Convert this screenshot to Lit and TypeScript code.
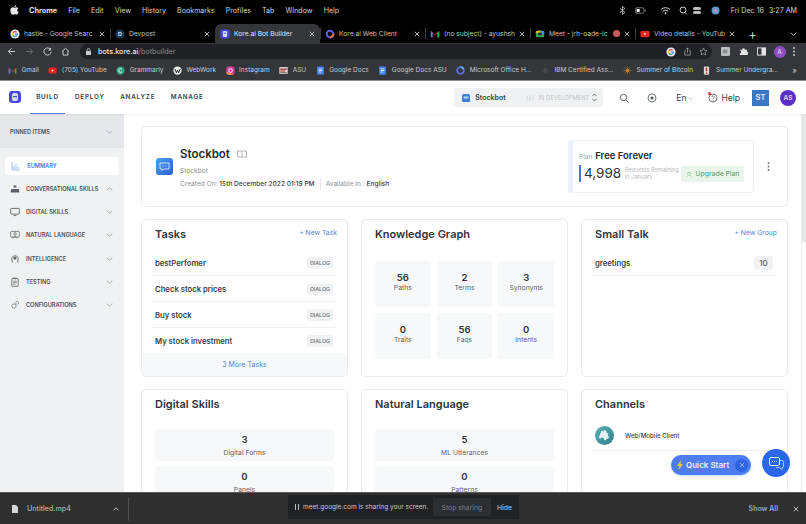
import { LitElement, html, css } from 'lit'
import { customElement } from 'lit/decorators.js'

const chevronDown = html`<svg class="chev" viewBox="0 0 10 6"><path d="M1 1l4 4 4-4" fill="none" stroke="#8a8f98" stroke-width="1"/></svg>`
const chevronUp = html`<svg class="chev" viewBox="0 0 10 6"><path d="M1 5l4-4 4 4" fill="none" stroke="#8a8f98" stroke-width="1"/></svg>`
const closeX = html`<svg class="x" viewBox="0 0 8 8"><path d="M1 1l6 6M7 1L1 7" stroke="#c8cacc" stroke-width="1.2"/></svg>`

const fav = {
  google: html`<svg class="ic" viewBox="0 0 24 24"><circle cx="12" cy="12" r="11" fill="#e8eaed"/><path d="M12 5a7 7 0 0 1 5 2l-2 2a4 4 0 0 0-6.500 1L6 8a7 7 0 0 1 6-3z" fill="#ea4335"/><path d="M6 8l2.500 2a4 4 0 0 0 0 4L6 16a7 7 0 0 1 0-8z" fill="#fbbc05"/><path d="M6 16l2.500-2a4 4 0 0 0 6 1.500l2 2A7 7 0 0 1 6 16z" fill="#34a853"/><path d="M19 11h-7v3h4a3 3 0 0 1-1.500 1.500l2 2A7 7 0 0 0 19 11z" fill="#4285f4"/></svg>`,
  devpost: html`<svg class="ic" viewBox="0 0 24 24"><circle cx="12" cy="12" r="11" fill="#1c3a57"/><text x="12" y="17" text-anchor="middle" font-size="13" font-weight="700" fill="#d9e4ee" font-family="Liberation Sans">D</text></svg>`,
  kore: html`<svg class="ic" viewBox="0 0 24 24"><rect x="1" y="1" width="22" height="22" rx="5" fill="#4a48d8"/><rect x="7" y="5" width="10" height="14" rx="3" fill="#d6d8fa"/><rect x="9" y="9" width="6" height="2" fill="#4a48d8"/></svg>`,
  ring: html`<svg class="ic" viewBox="0 0 24 24"><circle cx="12" cy="12" r="8" fill="none" stroke="#5a5ae0" stroke-width="5"/><path d="M12 20a8 8 0 0 0 8-8" fill="none" stroke="#e8703a" stroke-width="5"/></svg>`,
  gmail: html`<svg class="ic" viewBox="0 0 24 24"><path d="M2 5l10 8 10-8v15h-4V10l-6 5-6-5v10H2z" fill="#d9483b"/><path d="M18 10l4-5v15h-4z" fill="#34a853"/><path d="M2 5l4 5v10H2z" fill="#4285f4"/></svg>`,
  meet: html`<svg class="ic" viewBox="0 0 24 24"><rect x="2" y="4" width="20" height="16" rx="4" fill="#34a853"/><path d="M2 8a4 4 0 0 1 4-4h8v5H2z" fill="#fbbc05"/><path d="M14 4h4a4 4 0 0 1 4 4v4h-8z" fill="#4285f4"/><rect x="8" y="9" width="8" height="6" fill="#202124"/></svg>`,
  youtube: html`<svg class="ic" viewBox="0 0 24 24"><rect x="1" y="4" width="22" height="16" rx="4" fill="#e0281f"/><path d="M10 9l5 3-5 3z" fill="#fff"/></svg>`,
  grammarly: html`<svg class="ic" viewBox="0 0 24 24"><circle cx="12" cy="12" r="11" fill="#2fa37c"/><path d="M16 9a5 5 0 1 0 0 6" fill="none" stroke="#fff" stroke-width="2.500"/></svg>`,
  webwork: html`<svg class="ic" viewBox="0 0 24 24"><circle cx="12" cy="12" r="11" fill="#e8eaed"/><path d="M5 8l4 10 3-7 3 7 4-10" fill="none" stroke="#222" stroke-width="2.500"/></svg>`,
  instagram: html`<svg class="ic" viewBox="0 0 24 24"><rect x="1" y="1" width="22" height="22" rx="7" fill="#d6409f"/><path d="M1 16a7 7 0 0 0 7 7h8a7 7 0 0 0 4-1.500z" fill="#f79a3e"/><circle cx="12" cy="12" r="5" fill="none" stroke="#fff" stroke-width="2"/></svg>`,
  asu: html`<svg class="ic" viewBox="0 0 24 24"><rect x="1" y="3" width="22" height="18" fill="#e8e2d8"/><rect x="3" y="7" width="18" height="3" fill="#8c1d40"/><rect x="3" y="12" width="14" height="3" fill="#b33"/><rect x="3" y="17" width="18" height="2" fill="#444"/></svg>`,
  docs: html`<svg class="ic" viewBox="0 0 24 24"><rect x="3" y="1" width="18" height="22" rx="2" fill="#4285f4"/><path d="M7 8h10M7 12h10M7 16h7" stroke="#fff" stroke-width="2"/></svg>`,
  office: html`<svg class="ic" viewBox="0 0 24 24"><circle cx="12" cy="12" r="9" fill="none" stroke="#5b6fe0" stroke-width="5"/><path d="M12 3a9 9 0 0 1 8 5" fill="none" stroke="#58b8e8" stroke-width="5"/></svg>`,
  ibm: html`<svg class="ic" viewBox="0 0 24 24"><path d="M2 12l5-4v8zM9 6h6v12H9zM17 9l5 3-5 3z" fill="#4a4d50"/></svg>`,
  sun: html`<svg class="ic" viewBox="0 0 24 24"><circle cx="12" cy="12" r="5" fill="#d18a2c"/><path d="M12 1v22M1 12h22M4 4l16 16M20 4L4 20" stroke="#b5762a" stroke-width="1.500"/></svg>`,
  summer: html`<svg class="ic" viewBox="0 0 24 24"><rect x="5" y="1" width="14" height="22" rx="3" fill="#e4dcd8"/><rect x="10" y="4" width="4" height="10" fill="#c22e2e"/><rect x="10" y="17" width="4" height="4" fill="#c22e2e"/></svg>`,
}

const tabs = [
  { icon: fav.google, title: 'hastle - Google Searc' },
  { icon: fav.devpost, title: 'Devpost' },
  { icon: fav.kore, title: 'Kore.ai Bot Builder', active: true },
  { icon: fav.ring, title: 'Kore.ai Web Client' },
  { icon: fav.gmail, title: '(no subject) - ayushsh' },
  { icon: fav.meet, title: 'Meet - jrh-oade-ic', rec: true },
  { icon: fav.youtube, title: 'Video details - YouTub' },
]

const bookmarks = [
  { icon: fav.gmail, title: 'Gmail' },
  { icon: fav.youtube, title: '(705) YouTube' },
  { icon: fav.grammarly, title: 'Grammarly' },
  { icon: fav.webwork, title: 'WebWork' },
  { icon: fav.instagram, title: 'Instagram' },
  { icon: fav.asu, title: 'ASU' },
  { icon: fav.docs, title: 'Google Docs' },
  { icon: fav.docs, title: 'Google Docs ASU' },
  { icon: fav.office, title: 'Microsoft Office H...' },
  { icon: fav.ibm, title: 'IBM Certified Ass...' },
  { icon: fav.sun, title: 'Summer of Bitcoin' },
  { icon: fav.summer, title: 'Summer Undergra...' },
]

const navIcons = {
  chat: html`<svg class="nav-ic" viewBox="0 0 14 14"><path d="M5 2h4v3H5zM2 7h10l1 3H1zM1 10h12v2H1z" fill="#5b6068"/></svg>`,
  screen: html`<svg class="nav-ic" viewBox="0 0 14 14"><rect x="1" y="2" width="12" height="8" rx="1" fill="none" stroke="#5b6068" stroke-width="1.200"/><path d="M5 12h4" stroke="#5b6068" stroke-width="1.200"/></svg>`,
  language: html`<svg class="nav-ic" viewBox="0 0 14 14"><rect x="1" y="2" width="12" height="8" rx="1" fill="none" stroke="#5b6068"/><circle cx="7" cy="5.500" r="1.800" fill="none" stroke="#5b6068"/><path d="M4 12c0-2 1-3 3-3s3 1 3 3" fill="none" stroke="#5b6068"/></svg>`,
  brain: html`<svg class="nav-ic" viewBox="0 0 14 14"><path d="M3 12V9a4.500 4.500 0 1 1 8 0v3" fill="none" stroke="#5b6068" stroke-width="1.300"/><circle cx="7" cy="6" r="2" fill="#5b6068"/></svg>`,
  clipboard: html`<svg class="nav-ic" viewBox="0 0 14 14"><rect x="2.500" y="2" width="9" height="11" rx="1" fill="none" stroke="#5b6068" stroke-width="1.200"/><rect x="5" y="1" width="4" height="2" fill="#5b6068"/><path d="M4.500 6h5M4.500 8h5M4.500 10h3" stroke="#5b6068"/></svg>`,
  gears: html`<svg class="nav-ic" viewBox="0 0 14 14"><circle cx="5.500" cy="8.500" r="3" fill="none" stroke="#5b6068" stroke-width="1.300" stroke-dasharray="2 .7"/><circle cx="10" cy="4" r="2" fill="none" stroke="#5b6068" stroke-width="1.200" stroke-dasharray="1.500 .6"/></svg>`,
}

const navItems = [
  { icon: navIcons.chat, label: 'CONVERSATIONAL SKILLS', open: true },
  { icon: navIcons.screen, label: 'DIGITAL SKILLS' },
  { icon: navIcons.language, label: 'NATURAL LANGUAGE' },
  { icon: navIcons.brain, label: 'INTELLIGENCE' },
  { icon: navIcons.clipboard, label: 'TESTING' },
  { icon: navIcons.gears, label: 'CONFIGURATIONS' },
]

const taskRows = ['bestPerfomer', 'Check stock prices', 'Buy stock', 'My stock investment']
const graphStats = [
  ['56', 'Paths'], ['2', 'Terms'], ['3', 'Synonyms'],
  ['0', 'Traits'], ['56', 'Faqs'], ['0', 'Intents'],
]

@customElement('app-root')
export class AppRoot extends LitElement {
  static styles = css`
    :host {
      display: flex;
      flex-direction: column;
      position: relative;
      width: 806px;
      height: 524px;
      overflow: hidden;
      background: #fff;
      font-family: Inter, 'Liberation Sans', sans-serif;
      color: #2b2f36;
    }
    svg { display: block; flex: none; }
    .ic { width: 10px; height: 10px; }
    .chev { width: 7px; height: 4px; }
    .x { width: 6px; height: 6px; }

    /* mac menu bar */
    .menubar {
      height: 20px;
      flex: none;
      background: #000;
      color: #d4d4d4;
      font-size: 7.100px;
      display: flex;
      align-items: center;
      gap: 11px;
      padding: 0 9px 0 10px;
    }
    .menubar b { color: #e4e4e4; font-size: 7.300px; font-weight: 700; }
    .apple { width: 9px; height: 10px; margin-right: -1px; }
    .status { margin-left: auto; display: flex; align-items: center; gap: 7px; }
    .status span + span { margin-left: -2px; }
    .status-ic { width: 11px; height: 9px; }
    .status .wide { margin-right: 7px; }
    .status .tight { margin-right: -4px; }
    .status .siri { margin-right: 3px; }

    /* tab strip */
    .tabstrip {
      height: 23px;
      flex: none;
      background: #000;
      padding: 4px 0 0 5px;
      box-sizing: border-box;
      display: flex;
      align-items: stretch;
    }
    .tab {
      position: relative;
      width: 105px;
      box-sizing: border-box;
      padding: 0 5px;
      display: flex;
      align-items: center;
      gap: 4px;
      font-size: 6.700px;
      color: #bfc1c4;
      border-radius: 6px 6px 0 0;
    }
    .tab.active { background: #35363a; color: #e3e4e6; }
    .tab .t { flex: 1; overflow: hidden; white-space: nowrap; }
    .tab + .tab:not(.active)::before {
      content: '';
      position: absolute;
      left: 0;
      top: 4px;
      height: 11px;
      width: 1px;
      background: #3c3d40;
    }
    .rec { width: 7px; height: 7px; border-radius: 50%; background: #c95b5b; flex: none; }
    .plus { color: #e8e8e8; font-size: 14px; font-weight: 300; margin-left: 8px; align-self: center; }
    .tab-menu { margin-left: auto; align-self: center; margin-right: 9px; }

    /* chrome toolbar */
    .toolbar {
      height: 17px;
      flex: none;
      background: #35363a;
      display: flex;
      align-items: center;
      padding: 0 11px 0 7px;
      gap: 9px;
    }
    .tool { width: 9px; height: 9px; }
    .omnibox {
      flex: 1;
      height: 15px;
      margin-left: 1px;
      background: #202124;
      border-radius: 8px;
      display: flex;
      align-items: center;
      gap: 7px;
      padding: 0 4px 0 6px;
      font-size: 7.200px;
      color: #e6e6e6;
    }
    .omnibox span { flex: 1; font-weight: 500; }
    .omnibox i { font-style: normal; color: #8a8c90; font-weight: 400; }
    .lock { width: 5px; height: 7px; }
    .dots { width: 2px; height: 9px; }
    .avatar-a {
      width: 12px; height: 12px; border-radius: 50%;
      margin: 0 -1.500px;
      background: #8e4ec6; color: #eee; font-size: 6px;
      display: flex; align-items: center; justify-content: center;
    }

    /* bookmarks */
    .bookmarks {
      height: 21px;
      flex: none;
      box-sizing: border-box;
      background: #35363a;
      border-bottom: 1px solid #8f9092;
      display: flex;
      align-items: center;
      padding: 0 9px 0 8px;
      gap: 9.500px;
      font-size: 6.500px;
      color: #c9cbce;
    }
    .bm { display: flex; align-items: center; gap: 4.500px; white-space: nowrap; }
    .bm .ic { width: 9px; height: 9px; }
    .more { margin-left: auto; font-size: 8px; }

    /* app header */
    .app-header {
      height: 33px;
      flex: none;
      display: flex;
      align-items: stretch;
      padding: 0 10px 0 9px;
      box-shadow: 0 1px 2px #0000000d;
      position: relative;
      z-index: 1;
    }
    .logo { width: 12px; height: 12px; align-self: center; margin: 0 9px 2px 0; }
    .top-nav {
      display: flex;
      align-items: center;
      padding: 0 7px 1px;
      margin-right: 1.500px;
      font-size: 6.300px;
      font-weight: 600;
      letter-spacing: 0.800px;
      color: #3c4048;
    }
    .top-nav.active { box-shadow: inset 0 -1px 0 #4a76d9; width: 35px; box-sizing: border-box; justify-content: center; padding: 0 0 1px; margin-right: 3px; }
    .selector {
      margin: 7px 0 7px auto;
      width: 149px;
      box-sizing: border-box;
      background: #f0f1f3;
      border-radius: 2px;
      display: flex;
      align-items: center;
      padding: 0 6px 0 8px;
      font-size: 7px;
      font-weight: 600;
      color: #3c4048;
    }
    .selector .name { margin-left: 5px; flex: 1; }
    .selector .env { color: #c0c3c8; font-size: 5.800px; font-weight: 400; margin-left: 5px; margin-right: 3px; }
    .sel-ic { width: 8px; height: 8px; }
    .code-ic { width: 8px; height: 6px; }
    .updown { width: 5px; height: 9px; }
    .head-ic { width: 10px; height: 10px; }
    .head-ic.target { margin-left: 18px; }
    .head-tools { display: flex; align-items: center; margin-left: 16px; font-size: 8.500px; color: #3c4048; }
    .en { margin-left: 19px; display: flex; align-items: center; gap: 2px; font-size: 8.500px; }
    .en .chev { width: 5px; height: 3px; margin-top: 2px; }
    .help { margin-left: 15px; display: flex; align-items: center; gap: 3px; position: relative; }
    .help::before {
      content: '';
      position: absolute;
      left: 0; top: -1px;
      width: 3px; height: 3px;
      border-radius: 50%;
      background: #d9302f;
    }
    .st {
      margin-left: 12px;
      width: 17px; height: 16px;
      background: #3b78c4;
      color: #e8eef6;
      font-size: 7.500px;
      font-weight: 600;
      display: flex; align-items: center; justify-content: center;
    }
    .as {
      margin-left: 11px;
      width: 16px; height: 16px;
      border-radius: 50%;
      background: #5b2fc9;
      color: #e4dcf6;
      font-size: 6.500px;
      font-weight: 600;
      display: flex; align-items: center; justify-content: center;
    }

    /* body */
    .body { flex: 1; min-height: 0; display: flex; }
    .sidebar { width: 124px; flex: none; background: #f0f1f3; }
    .pinned {
      height: 34px;
      box-sizing: border-box;
      padding: 1px 11px 0 10px;
      background: #e6e7ea;
      display: flex;
      align-items: center;
      justify-content: space-between;
      font-size: 5.600px;
      font-weight: 600;
      color: #4b4f57;
    }
    .summary {
      margin: 9px 5px 2px;
      height: 18px;
      background: #fff;
      border-radius: 3px;
      display: flex;
      align-items: center;
      gap: 6px;
      padding: 0 6px 1px;
      box-sizing: border-box;
      font-size: 5.600px;
      font-weight: 600;
      color: #4a76d9;
    }
    .nav-ic { width: 10px; height: 10px; }
    .nav-item {
      height: 23.300px;
      display: flex;
      align-items: center;
      gap: 6px;
      padding: 0 11px 0 10px;
      font-size: 5.600px;
      font-weight: 600;
      color: #4b4f57;
    }
    .nav-item span { flex: 1; white-space: nowrap; }
    .content {
      flex: 1;
      min-width: 0;
      overflow: hidden;
      padding: 12px 13px 0 17px;
      display: grid;
      grid-template-columns: repeat(3, 1fr);
      grid-auto-rows: min-content;
      gap: 12px 13px;
    }
    .scrollbar { width: 4px; flex: none; border-left: 1px solid #e9eaec; }
    .scrollbar div { height: 128px; background: #e6e7e9; }

    .card {
      background: #fff;
      border: 1px solid #e8eaed;
      border-radius: 5px;
      box-sizing: border-box;
      position: relative;
      overflow: hidden;
    }
    .bot-card {
      grid-column: 1 / -1;
      height: 81px;
      display: flex;
      align-items: center;
      padding: 0 17px 0 14px;
    }
    .bot-icon { width: 17px; height: 17px; margin-right: 7px; }
    .bot-info { padding-top: 3px; }
    .bot-title { display: flex; align-items: center; gap: 7px; font-size: 11.500px; font-weight: 600; color: #26292e; line-height: 15px; }
    .bot-title svg { width: 10px; height: 8px; }
    .bot-sub { font-size: 6.600px; color: #8b8f96; margin-top: 3px; line-height: 12px; }
    .bot-meta { font-size: 6.600px; color: #8b8f96; margin-top: 1px; line-height: 12px; display: flex; }
    .bot-meta b { color: #3c4048; font-weight: 500; }
    .bot-meta .sep { border-left: 1px solid #e4e6e9; margin: 0 5px; }
    .plan {
      margin-left: auto;
      width: 186px;
      height: 53px;
      box-sizing: border-box;
      border: 1px solid #f0f1f3;
      border-left: 5px solid #eaf0fc;
      border-radius: 4px;
      padding: 9px 8px 0 6px;
    }
    .plan-top { display: flex; align-items: baseline; gap: 3px; font-size: 6.500px; color: #a0a4aa; }
    .plan-top b { font-size: 9.500px; font-weight: 600; color: #26292e; }
    .plan-row { display: flex; align-items: center; margin-top: 4px; }
    .plan-num {
      border-left: 2.500px solid #4a76d9;
      padding-left: 3px;
      font-size: 13.500px;
      line-height: 17px;
      width: 41px;
      box-sizing: border-box;
      color: #30343a;
      flex: none;
    }
    .plan-note { font-size: 5.600px; line-height: 7px; color: #b8bbc0; margin-left: 5px; width: 56px; flex: none; white-space: nowrap; }
    .upgrade {
      width: 63px; height: 16px;
      background: #e9f5ea;
      color: #69a971;
      border-radius: 2px;
      font-size: 6.800px;
      font-weight: 500;
      display: flex; align-items: center; justify-content: center; gap: 4px;
    }
    .upgrade svg { width: 6px; height: 6px; }
    .kebab { width: 3px; height: 9px; margin-left: 13px; }

    .tile-card { height: 158px; padding: 0 13px; }
    .tile-card.open { height: 200px; }
    .card-head {
      display: flex;
      justify-content: space-between;
      align-items: flex-start;
      padding-top: 7px;
      height: 30px;
      box-sizing: border-box;
      font-size: 11px;
      font-weight: 600;
      color: #30343a;
      line-height: 14px;
    }
    .card-head a { font-size: 6.800px; font-weight: 400; color: #5a7fd8; line-height: 10px; margin: 1px -3px 0 0; }
    .list-row {
      height: 26px;
      margin: 0 -3px;
      padding: 1px 3px 0;
      box-sizing: border-box;
      display: flex;
      align-items: center;
      justify-content: space-between;
      border-bottom: 1px solid #eef0f2;
      font-size: 7.700px;
      font-weight: 600;
      color: #3c4048;
    }
    .list-row .badge {
      background: #f1f2f4;
      color: #6e7278;
      font-size: 5.400px;
      font-weight: 500;
      border-radius: 2px;
      height: 12px;
      width: 26px;
      margin-right: 1px;
      display: flex; align-items: center; justify-content: center;
    }
    .list-row .count {
      background: #f1f2f4;
      color: #55595f;
      font-size: 8px;
      font-weight: 500;
      border-radius: 2px;
      height: 14px;
      width: 19px;
      margin-right: 1px;
      display: flex; align-items: center; justify-content: center;
    }
    .more-tasks {
      position: absolute;
      left: 0; right: 0; bottom: 0;
      height: 23px;
      background: #f6f8fa;
      color: #5a7fd8;
      font-size: 7px;
      display: flex; align-items: center; justify-content: center;
    }
    .tile-grid {
      display: grid;
      grid-template-columns: repeat(3, 1fr);
      gap: 6px;
      margin-top: 11px;
    }
    .tile {
      background: #f7f8fa;
      border-radius: 3px;
      height: 46px;
      display: flex;
      flex-direction: column;
      align-items: center;
      justify-content: center;
      padding-bottom: 4px;
      box-sizing: border-box;
      font-size: 6.800px;
      color: #5f636a;
    }
    .tile b { font-size: 9.500px; font-weight: 600; color: #30343a; line-height: 11px; }
    .tile span { line-height: 9px; }
    .stack { display: flex; flex-direction: column; gap: 5px; margin-top: 9px; }
    .stack .tile { height: 32px; padding-bottom: 0; }
    .stack .tile span { margin-top: 3px; }
    .channel {
      height: 31px;
      margin: 0 -3px;
      padding: 0 3px;
      box-sizing: border-box;
      display: flex;
      align-items: center;
      border-bottom: 1px solid #eef0f2;
      font-size: 6.200px;
      font-weight: 500;
      color: #3c4048;
      gap: 11px;
    }
    .channel svg { width: 19px; height: 19px; }

    /* floating widgets */
    .quick {
      position: absolute;
      left: 671px; top: 455px;
      width: 80px; height: 20px;
      box-sizing: border-box;
      padding: 0 3px 0 6px;
      border-radius: 10px;
      background: #4d7df0;
      box-shadow: 0 1px 3px #4d7df055;
      color: #e8effd;
      font-size: 8px;
      font-weight: 600;
      display: flex;
      align-items: center;
      gap: 3px;
    }
    .quick .bolt { width: 6px; height: 10px; }
    .quick .close {
      margin-left: auto;
      width: 13px; height: 13px;
      border-radius: 50%;
      background: #2f62e0;
      display: flex; align-items: center; justify-content: center;
    }
    .fab {
      position: absolute;
      left: 762px; top: 449px;
      width: 28px; height: 28px;
      border-radius: 50%;
      background: #2b66ea;
      display: flex; align-items: center; justify-content: center;
    }
    .fab svg { width: 15px; height: 13px; }

    /* download shelf */
    .shelf {
      height: 32px;
      flex: none;
      position: relative;
      z-index: 1;
      background: #2f2f2f;
      border-top: 1px solid #5a5a5a;
      box-sizing: border-box;
      display: flex;
      align-items: center;
      color: #c4c6c8;
      font-size: 7.200px;
    }
    .file { display: flex; align-items: center; width: 129px; height: 24px; box-sizing: border-box; padding: 0 9px 0 12px; border-right: 1px solid #4e4e4e; }
    .file svg:first-child { width: 6px; height: 8px; margin-right: 9px; }
    .file span { flex: 1; }
    .file .chev { width: 6px; height: 4px; }
    .show-all { margin-left: auto; color: #8fa8d0; font-weight: 600; font-size: 7px; }
    .shelf > .x { width: 6px; height: 6px; margin: 0 7px 0 15px; }
    .sharing {
      position: absolute;
      left: 288px; top: 495px;
      width: 231px; height: 24px;
      z-index: 2;
      background: #212224;
      display: flex;
      align-items: center;
      box-sizing: border-box;
      padding: 0 7px;
      color: #c8cacc;
      font-size: 6.500px;
      white-space: nowrap;
    }
    .sharing .pause { width: 4px; height: 6px; margin-right: 4px; flex: none; border-left: 1px solid #bbb; border-right: 1px solid #bbb; box-sizing: border-box; }
    .sharing .stop {
      margin-left: auto;
      width: 58px; height: 18px;
      flex: none;
      background: #2e2f32;
      color: #7c7e82;
      font-size: 6.800px;
      border-radius: 2px;
      display: flex; align-items: center; justify-content: center;
    }
    .sharing .hide { margin-left: 6px; color: #8fa8d0; font-weight: 600; font-size: 6.800px; }
  `

  render() {
    return html`
      ${this.renderBrowser()}
      ${this.renderAppHeader()}
      <div class="body">
        ${this.renderSidebar()}
        <div class="content">
          ${this.renderBotCard()}
          ${this.renderTasks()}
          ${this.renderGraph()}
          <div class="card tile-card">
            <div class="card-head">Small Talk<a>+ New Group</a></div>
            <div class="list-row">greetings<span class="count">10</span></div>
          </div>
          <div class="card tile-card open">
            <div class="card-head">Digital Skills</div>
            <div class="stack">
              <div class="tile"><b>3</b><span>Digital Forms</span></div>
              <div class="tile"><b>0</b><span>Panels</span></div>
            </div>
          </div>
          <div class="card tile-card open">
            <div class="card-head">Natural Language</div>
            <div class="stack">
              <div class="tile"><b>5</b><span>ML Utterances</span></div>
              <div class="tile"><b>0</b><span>Patterns</span></div>
            </div>
          </div>
          <div class="card tile-card open">
            <div class="card-head">Channels</div>
            <div class="channel">
              <svg viewBox="0 0 20 20">
                <defs><linearGradient id="c" x1="0" y1="0" x2="1" y2="1"><stop offset="0" stop-color="#5ab0b8"/><stop offset="1" stop-color="#2f8088"/></linearGradient></defs>
                <circle cx="10" cy="10" r="10" fill="url(#c)"/>
                <path d="M6 7h2.200a1.800 1.800 0 1 1 3.600 0H14v2.400a1.800 1.800 0 1 1 0 3.600V15h-2.200a1.800 1.800 0 1 0-3.600 0H6z" fill="#e6f2f4" transform="rotate(20 10 10) translate(-.8 -.5)"/>
              </svg>
              Web/Mobile Client
            </div>
          </div>
        </div>
        <div class="scrollbar"><div></div></div>
      </div>
      <div class="shelf">
        <div class="file">
          <svg viewBox="0 0 6 8"><path d="M0 0h4l2 2v6H0z" fill="#d4d6d8"/></svg>
          <span>Untitled.mp4</span>
          <svg class="chev" viewBox="0 0 10 6"><path d="M1 5l4-4 4 4" fill="none" stroke="#d0d0d0" stroke-width="1.500"/></svg>
        </div>
        <span class="show-all">Show All</span>
        ${closeX}
      </div>
      <div class="sharing">
        <span class="pause"></span>
        <span>meet.google.com is sharing your screen.</span>
        <span class="stop">Stop sharing</span>
        <span class="hide">Hide</span>
      </div>
      <div class="quick">
        <svg class="bolt" viewBox="0 0 6 10"><path d="M4 0L0 6h2.200L1.500 10 6 4H3.600z" fill="#f5c344"/></svg>
        Quick Start
        <span class="close"><svg class="x" viewBox="0 0 8 8"><path d="M1 1l6 6M7 1L1 7" stroke="#bcd0fa" stroke-width="1"/></svg></span>
      </div>
      <div class="fab">
        <svg viewBox="0 0 15 13"><rect x=".5" y=".5" width="10" height="8" rx="1.500" fill="none" stroke="#e8effd"/><path d="M3 4.500h.8M5 4.500h.8M7 4.500h.8" stroke="#e8effd"/><path d="M11 3.500h2a1.500 1.500 0 0 1 1.500 1.500v4A1.500 1.500 0 0 1 13 10.500v2l-2.500-2H7" fill="none" stroke="#a9c3f7"/></svg>
      </div>
    `
  }

  renderBrowser() {
    return html`
      <div class="menubar">
        <svg class="apple" viewBox="0 0 10 12"><path d="M7 0c0 1.300-1 2.500-2.300 2.500C4.700 1.200 5.800.2 7 0zM5 3.200c.6 0 1.300-.5 2.300-.5.900 0 1.700.4 2.200 1.200-1.900 1.100-1.500 3.700.5 4.400-.5 1.400-1.600 3.400-2.800 3.400-.7 0-1-.5-1.900-.5s-1.300.5-2 .5C1.600 11.700 0 8.900 0 6.500 0 4.100 1.500 2.800 3 2.800c.8 0 1.500.4 2 .4z" fill="#e8e8e8"/></svg>
        <b>Chrome</b>
        <span>File</span><span>Edit</span><span>View</span><span>History</span><span>Bookmarks</span>
        <span>Profiles</span><span>Tab</span><span>Window</span><span>Help</span>
        <div class="status">
          <svg class="status-ic" viewBox="0 0 11 9"><path d="M3 2.500l5 4-2.500 2v-8l2.500 2-5 4" fill="none" stroke="#ccc" stroke-width=".8"/></svg>
          <svg class="status-ic wide" viewBox="0 0 14 9"><rect x=".5" y="1" width="11" height="7" rx="2" fill="none" stroke="#bbb" stroke-width=".8"/><rect x="2" y="2.500" width="4" height="4" fill="#eee"/><path d="M13 3.500v2" stroke="#bbb"/></svg>
          <svg class="status-ic" viewBox="0 0 12 9"><path d="M1 3.500a7 7 0 0 1 10 0M3 5.500a4 4 0 0 1 6 0" fill="none" stroke="#ddd" stroke-width="1"/><circle cx="6" cy="7.500" r="1" fill="#ddd"/></svg>
          <svg class="status-ic tight" viewBox="0 0 11 9"><circle cx="5" cy="4" r="3" fill="none" stroke="#ccc"/><path d="M7 6.500L9 8.500" stroke="#ccc"/></svg>
          <svg class="status-ic" viewBox="0 0 11 9"><rect x="1" y="1" width="8" height="3" rx="1.500" fill="#bbb"/><rect x="1" y="5" width="8" height="3" rx="1.500" fill="#bbb"/></svg>
          <svg class="status-ic siri" viewBox="0 0 11 9"><circle cx="5.500" cy="4.500" r="4" fill="#5b9bc8"/><circle cx="5.500" cy="4.500" r="2" fill="#b58ad0"/></svg>
          <span>Fri Dec 16</span>
          <span>3:27 AM</span>
        </div>
      </div>
      <div class="tabstrip">
        ${tabs.map(t => html`
          <div class="tab ${t.active ? 'active' : ''}">
            ${t.icon}
            <span class="t">${t.title}</span>
            ${t.rec ? html`<span class="rec"></span>` : ''}
            ${closeX}
          </div>
        `)}
        <span class="plus">+</span>
        <svg class="chev tab-menu" viewBox="0 0 10 6"><path d="M1 1l4 4 4-4" fill="none" stroke="#c8cacc" stroke-width="1.500"/></svg>
      </div>
      <div class="toolbar">
        <svg class="tool" viewBox="0 0 10 10"><path d="M9 5H1.500M5 1.500L1.500 5 5 8.500" fill="none" stroke="#c8cacc" stroke-width="1.100"/></svg>
        <svg class="tool" viewBox="0 0 10 10"><path d="M1 5h7.500M5 1.500L8.500 5 5 8.500" fill="none" stroke="#6b6d70" stroke-width="1.100"/></svg>
        <svg class="tool" viewBox="0 0 10 10"><path d="M8.500 3a4 4 0 1 0 .5 2.500" fill="none" stroke="#c8cacc" stroke-width="1.100"/><path d="M9 .5v3.500H5.500z" fill="#c8cacc"/></svg>
        <svg class="tool" viewBox="0 0 10 10"><path d="M1 5l4-3.500L9 5M2.300 4.500V9h5.400V4.500" fill="none" stroke="#c8cacc" stroke-width="1.100"/></svg>
        <div class="omnibox">
          <svg class="lock" viewBox="0 0 5 7"><rect y="3" width="5" height="4" rx=".5" fill="#c8cacc"/><path d="M1 3V2a1.500 1.500 0 0 1 3 0v1" fill="none" stroke="#c8cacc" stroke-width=".8"/></svg>
          <span>bots.kore.ai<i>/botbuilder</i></span>
          ${fav.google}
          <svg class="tool" viewBox="0 0 10 10"><path d="M3 4H2v5h6V4H7M5 6.500V1M3.500 2.500L5 1l1.500 1.500" fill="none" stroke="#a8aaae" stroke-width=".8"/></svg>
          <svg class="tool" viewBox="0 0 10 10"><path d="M5 1l1.200 2.700 2.800.3-2.100 1.900.6 2.900L5 7.400 2.500 8.800l.6-2.900L1 4l2.800-.3z" fill="none" stroke="#a8aaae" stroke-width=".8"/></svg>
        </div>
        <svg class="tool" viewBox="0 0 10 10"><rect width="10" height="10" rx="1.500" fill="#b9bbbe"/><rect x="2" y="3" width="5" height="4" fill="#8a8c90"/></svg>
        <svg class="tool" viewBox="0 0 10 10"><path d="M1 3h2.500a1.500 1.500 0 0 1 3 0H9v2.500a1.500 1.500 0 0 1 0 3V9H1V7a1.500 1.500 0 0 0 0-3z" fill="#e4e4e4"/></svg>
        <svg class="tool" viewBox="0 0 10 10"><rect x=".5" y="1" width="9" height="8" fill="none" stroke="#e4e4e4"/><rect x="5" y="1" width="4.500" height="8" fill="#e4e4e4"/></svg>
        <div class="avatar-a">A</div>
        <svg class="dots" viewBox="0 0 2 9"><circle cx="1" cy="1" r="1" fill="#c8cacc"/><circle cx="1" cy="4.500" r="1" fill="#c8cacc"/><circle cx="1" cy="8" r="1" fill="#c8cacc"/></svg>
      </div>
      <div class="bookmarks">
        ${bookmarks.map(b => html`<div class="bm">${b.icon}<span>${b.title}</span></div>`)}
        <span class="more">»</span>
      </div>
    `
  }

  renderAppHeader() {
    return html`
      <div class="app-header">
        <svg class="logo" viewBox="0 0 12 12"><rect width="12" height="12" rx="3" fill="#4a48d8"/><rect x="3" y="2" width="6" height="8" rx="2" fill="#d6d8fa"/><rect x="4" y="5" width="4" height="1.200" fill="#4a48d8"/></svg>
        <div class="top-nav active">BUILD</div>
        <div class="top-nav">DEPLOY</div>
        <div class="top-nav">ANALYZE</div>
        <div class="top-nav">MANAGE</div>
        <div class="selector">
          <svg class="sel-ic" viewBox="0 0 8 8"><rect width="8" height="8" rx="1.500" fill="#3b7fd6"/><rect x="1.500" y="2.500" width="5" height="2" fill="#bcd6f5"/></svg>
          <span class="name">Stockbot</span>
          <svg class="code-ic" viewBox="0 0 8 6"><path d="M2 .5L.5 3 2 5.500M6 .5L7.500 3 6 5.500M4.700.5L3.300 5.500" fill="none" stroke="#c0c3c8" stroke-width=".6"/></svg>
          <span class="env">IN DEVELOPMENT</span>
          <svg class="updown" viewBox="0 0 5 9"><path d="M.5 3.200L2.500 1l2 2.200M.5 5.800l2 2.200 2-2.200" fill="none" stroke="#5b6068" stroke-width=".8"/></svg>
        </div>
        <div class="head-tools">
          <svg class="head-ic" viewBox="0 0 10 10"><circle cx="4.500" cy="4.500" r="3.200" fill="none" stroke="#50545b" stroke-width=".9"/><path d="M7 7l2.500 2.500" stroke="#50545b" stroke-width=".9"/></svg>
          <svg class="head-ic target" viewBox="0 0 10 10"><circle cx="5" cy="5" r="4" fill="none" stroke="#50545b" stroke-width=".8"/><circle cx="5" cy="5" r="1.500" fill="#50545b"/></svg>
          <div class="en">En ${chevronDown}</div>
          <div class="help">
            <svg class="head-ic" viewBox="0 0 10 10"><circle cx="5" cy="5" r="4" fill="none" stroke="#50545b" stroke-width=".8"/><path d="M3.800 4a1.200 1.200 0 1 1 1.800 1c-.5.300-.6.500-.6 1M5 7v.8" fill="none" stroke="#50545b" stroke-width=".7"/></svg>
            Help
          </div>
          <div class="st">ST</div>
          <div class="as">AS</div>
        </div>
      </div>
    `
  }

  renderSidebar() {
    return html`
      <div class="sidebar">
        <div class="pinned">PINNED ITEMS ${chevronDown}</div>
        <div class="summary">
          <svg class="nav-ic" viewBox="0 0 10 10"><path d="M1 1v8h8M3 8V5M5 8V3M7 8V6" fill="none" stroke="#8aa6e6" stroke-width=".8"/></svg>
          SUMMARY
        </div>
        ${navItems.map(n => html`
          <div class="nav-item">${n.icon}<span>${n.label}</span>${n.open ? chevronUp : chevronDown}</div>
        `)}
      </div>
    `
  }

  renderBotCard() {
    return html`
      <div class="card bot-card">
        <svg class="bot-icon" viewBox="0 0 17 17">
          <defs><linearGradient id="b" x1="0" y1="0" x2="1" y2="1"><stop offset="0" stop-color="#4aa3ea"/><stop offset="1" stop-color="#2a5fd4"/></linearGradient></defs>
          <rect width="17" height="17" rx="3" fill="url(#b)"/>
          <path d="M4 5h9v6H8l-2 1.500V11H4z" fill="none" stroke="#d8e8fa" stroke-width=".9"/>
          <path d="M6.500 8h1M9.500 8h1" stroke="#d8e8fa"/>
        </svg>
        <div class="bot-info">
          <div class="bot-title">Stockbot
            <svg viewBox="0 0 10 8"><path d="M.5 1h4l.5.500.5-.500h4v6h-4l-.5.500-.5-.500h-4zM5 1.500V7" fill="none" stroke="#8b8f96" stroke-width=".7"/></svg>
          </div>
          <div class="bot-sub">Stockbot</div>
          <div class="bot-meta">
            <span>Created On: <b>15th December 2022 01:19 PM</b></span>
            <span class="sep"></span>
            <span>Available in : <b>English</b></span>
          </div>
        </div>
        <div class="plan">
          <div class="plan-top">Plan <b>Free Forever</b></div>
          <div class="plan-row">
            <div class="plan-num">4,998</div>
            <div class="plan-note">Requests Remaining<br />in January</div>
            <div class="upgrade">
              <svg viewBox="0 0 6 6"><path d="M1 3l2-2 2 2M1 5.500l2-2 2 2" fill="none" stroke="#69a971" stroke-width=".7"/></svg>
              Upgrade Plan
            </div>
          </div>
        </div>
        <svg class="kebab" viewBox="0 0 3 9"><circle cx="1.500" cy="1" r=".9" fill="#6b6f76"/><circle cx="1.500" cy="4.500" r=".9" fill="#6b6f76"/><circle cx="1.500" cy="8" r=".9" fill="#6b6f76"/></svg>
      </div>
    `
  }

  renderTasks() {
    return html`
      <div class="card tile-card">
        <div class="card-head">Tasks<a>+ New Task</a></div>
        ${taskRows.map(t => html`<div class="list-row">${t}<span class="badge">DIALOG</span></div>`)}
        <div class="more-tasks">3 More Tasks</div>
      </div>
    `
  }

  renderGraph() {
    return html`
      <div class="card tile-card">
        <div class="card-head">Knowledge Graph</div>
        <div class="tile-grid">
          ${graphStats.map(([n, l]) => html`<div class="tile"><b>${n}</b><span>${l}</span></div>`)}
        </div>
      </div>
    `
  }
}
